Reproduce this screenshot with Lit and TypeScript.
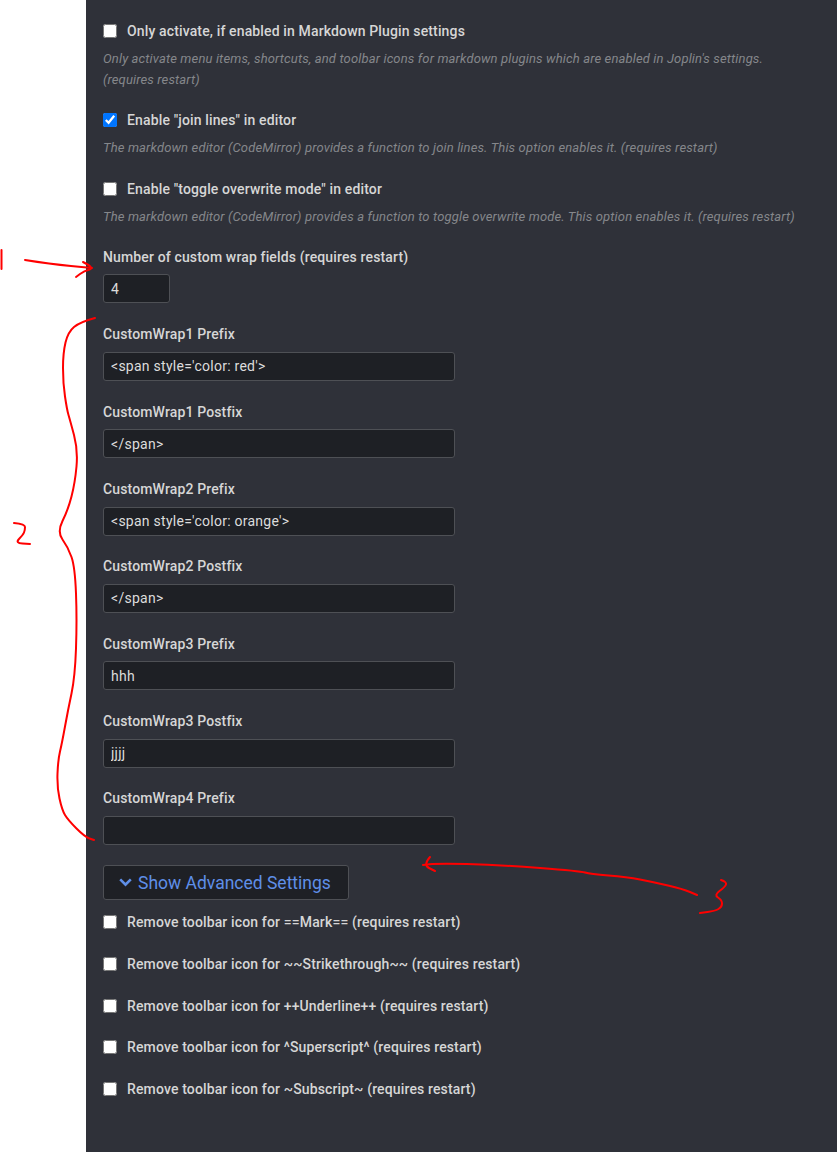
import { LitElement, html, css, svg } from 'lit';
import { customElement } from 'lit/decorators.js';

type Pt = [number, number];

// freehand annotation strokes, in page coordinates
const strokes: Pt[][] = [
  [[1.5, 250], [1.5, 269]],
  [[25, 260], [50, 264], [92, 268]],
  [[83, 262], [95, 268], [84, 271], [76, 277]],
  [[95, 318], [80, 322], [68, 332], [63, 353], [63, 383], [67, 410], [70, 420], [78, 450], [75, 483], [68, 510], [57, 532], [68, 547], [75, 567], [77, 620], [75, 677], [68, 710], [62, 743], [58, 760], [57, 787], [62, 810], [68, 820], [85, 837], [94, 840]],
  [[14, 523], [25, 524], [25, 530], [23, 535], [15, 543], [30, 544]],
  [[430, 857], [423, 865], [435, 871]],
  [[423, 865], [433, 863], [500, 865], [580, 871], [590, 874], [627, 877], [653, 882], [683, 889], [697, 895]],
  [[721, 880], [727, 882], [725, 887], [714, 895], [722, 900], [722, 907], [715, 911], [700, 913]],
];

function smooth(pts: Pt[]) {
  let d = `M${pts[0][0]} ${pts[0][1]}`;
  for (let i = 1; i < pts.length - 1; i++) {
    const mx = (pts[i][0] + pts[i + 1][0]) / 2;
    const my = (pts[i][1] + pts[i + 1][1]) / 2;
    d += ` Q${pts[i][0]} ${pts[i][1]} ${mx} ${my}`;
  }
  const last = pts[pts.length - 1];
  return `${d} L${last[0]} ${last[1]}`;
}

const topOptions = [
  {
    label: 'Only activate, if enabled in Markdown Plugin settings',
    desc: "Only activate menu items, shortcuts, and toolbar icons for markdown plugins which are enabled in Joplin's settings. (requires restart)",
    checked: false,
  },
  {
    label: 'Enable "join lines" in editor',
    desc: 'The markdown editor (CodeMirror) provides a function to join lines. This option enables it. (requires restart)',
    checked: true,
  },
  {
    label: 'Enable "toggle overwrite mode" in editor',
    desc: 'The markdown editor (CodeMirror) provides a function to toggle overwrite mode. This option enables it. (requires restart)',
    checked: false,
  },
];

const wrapFields = [
  ['CustomWrap1 Prefix', "<span style='color: red'>"],
  ['CustomWrap1 Postfix', '</span>'],
  ['CustomWrap2 Prefix', "<span style='color: orange'>"],
  ['CustomWrap2 Postfix', '</span>'],
  ['CustomWrap3 Prefix', 'hhh'],
  ['CustomWrap3 Postfix', 'jjjj'],
  ['CustomWrap4 Prefix', ''],
];

const advanced = [
  'Remove toolbar icon for ==Mark== (requires restart)',
  'Remove toolbar icon for ~~Strikethrough~~ (requires restart)',
  'Remove toolbar icon for ++Underline++ (requires restart)',
  'Remove toolbar icon for ^Superscript^ (requires restart)',
  'Remove toolbar icon for ~Subscript~ (requires restart)',
];

@customElement('app-root')
export class AppRoot extends LitElement {
  static styles = css`
    :host {
      display: block;
      position: relative;
      height: 1152px;
      overflow: hidden;
      background: #fff;
      font-family: Roboto, 'Liberation Sans', sans-serif;
    }
    .main {
      box-sizing: border-box;
      height: 1152px;
      margin-left: 86px;
      padding: 20.5px 40px 0 17px;
      background: #2f3139;
      color: #d6d6d6;
      font-size: 14px;
      line-height: 21px;
      letter-spacing: 0.14px;
    }
    .check {
      display: flex;
      align-items: center;
      gap: 10px;
      font-weight: 500;
    }
    .check input {
      width: 14px;
      height: 14px;
      margin: -1px 0 0;
      flex: none;
    }
    .desc {
      margin: 6px 0 20.5px;
      font-size: 13px;
      font-style: italic;
      color: #85878b;
    }
    .field-label {
      font-weight: 500;
      margin-bottom: 6.5px;
    }
    .field {
      margin-bottom: 20.83px;
    }
    .field.count {
      margin-bottom: 21.1px;
    }
    .field.count .field-label {
      margin-bottom: 6.4px;
    }
    .field input {
      display: block;
      box-sizing: border-box;
      width: 352px;
      height: 29px;
      padding: 0 7px;
      border: 1px solid #4e5055;
      border-radius: 3px;
      background: #1e2025;
      color: #dcdcdc;
      font: 400 14px Roboto, 'Liberation Sans', sans-serif;
      letter-spacing: 0.26px;
      outline: none;
    }
    .field.count input {
      width: 67px;
    }
    .toggle {
      display: flex;
      align-items: center;
      gap: 6px;
      box-sizing: border-box;
      width: 246px;
      height: 35px;
      padding: 0 15px;
      border: 1px solid #4e5055;
      border-radius: 3px;
      background: #1e2025;
      color: #5f8fe8;
      font: 400 17.5px Roboto, 'Liberation Sans', sans-serif;
      letter-spacing: 0;
      white-space: nowrap;
      margin: -0.5px 0 11.81px;
    }
    .toggle svg {
      width: 13px;
      height: 14px;
      flex: none;
    }
    .advanced {
      display: flex;
      flex-direction: column;
      gap: 20.75px;
    }
    .marks {
      position: absolute;
      left: 0;
      top: 0;
      pointer-events: none;
    }
    .marks path {
      fill: none;
      stroke: #f00;
      stroke-width: 2;
      stroke-linecap: round;
      stroke-linejoin: round;
    }
  `;

  renderField(label: string, value: string, count = false) {
    return html`
      <div class="field ${count ? 'count' : ''}">
        <div class="field-label">${label}</div>
        <input type="text" .value=${value} />
      </div>
    `;
  }

  render() {
    return html`
      <div class="main">
        ${topOptions.map(
          (o) => html`
            <label class="check">
              <input type="checkbox" .checked=${o.checked} />${o.label}
            </label>
            <div class="desc">${o.desc}</div>
          `
        )}
        ${this.renderField('Number of custom wrap fields (requires restart)', '4', true)}
        ${wrapFields.map(([l, v]) => this.renderField(l, v))}
        <div class="toggle">
          <svg viewBox="0 0 13 14">
            <path d="M0.3 4.2 L2.1 2.4 L6.5 6.8 L10.9 2.4 L12.7 4.2 L6.5 10.4 Z" fill="#5f8fe8" />
          </svg>
          Show Advanced Settings
        </div>
        <div class="advanced">
          ${advanced.map(
            (t) => html`
              <label class="check"><input type="checkbox" />${t}</label>
            `
          )}
        </div>
      </div>
      <svg class="marks" width="837" height="1152" viewBox="0 0 837 1152">
        ${strokes.map((s) => svg`<path d=${smooth(s)} />`)}
      </svg>
    `;
  }
}
